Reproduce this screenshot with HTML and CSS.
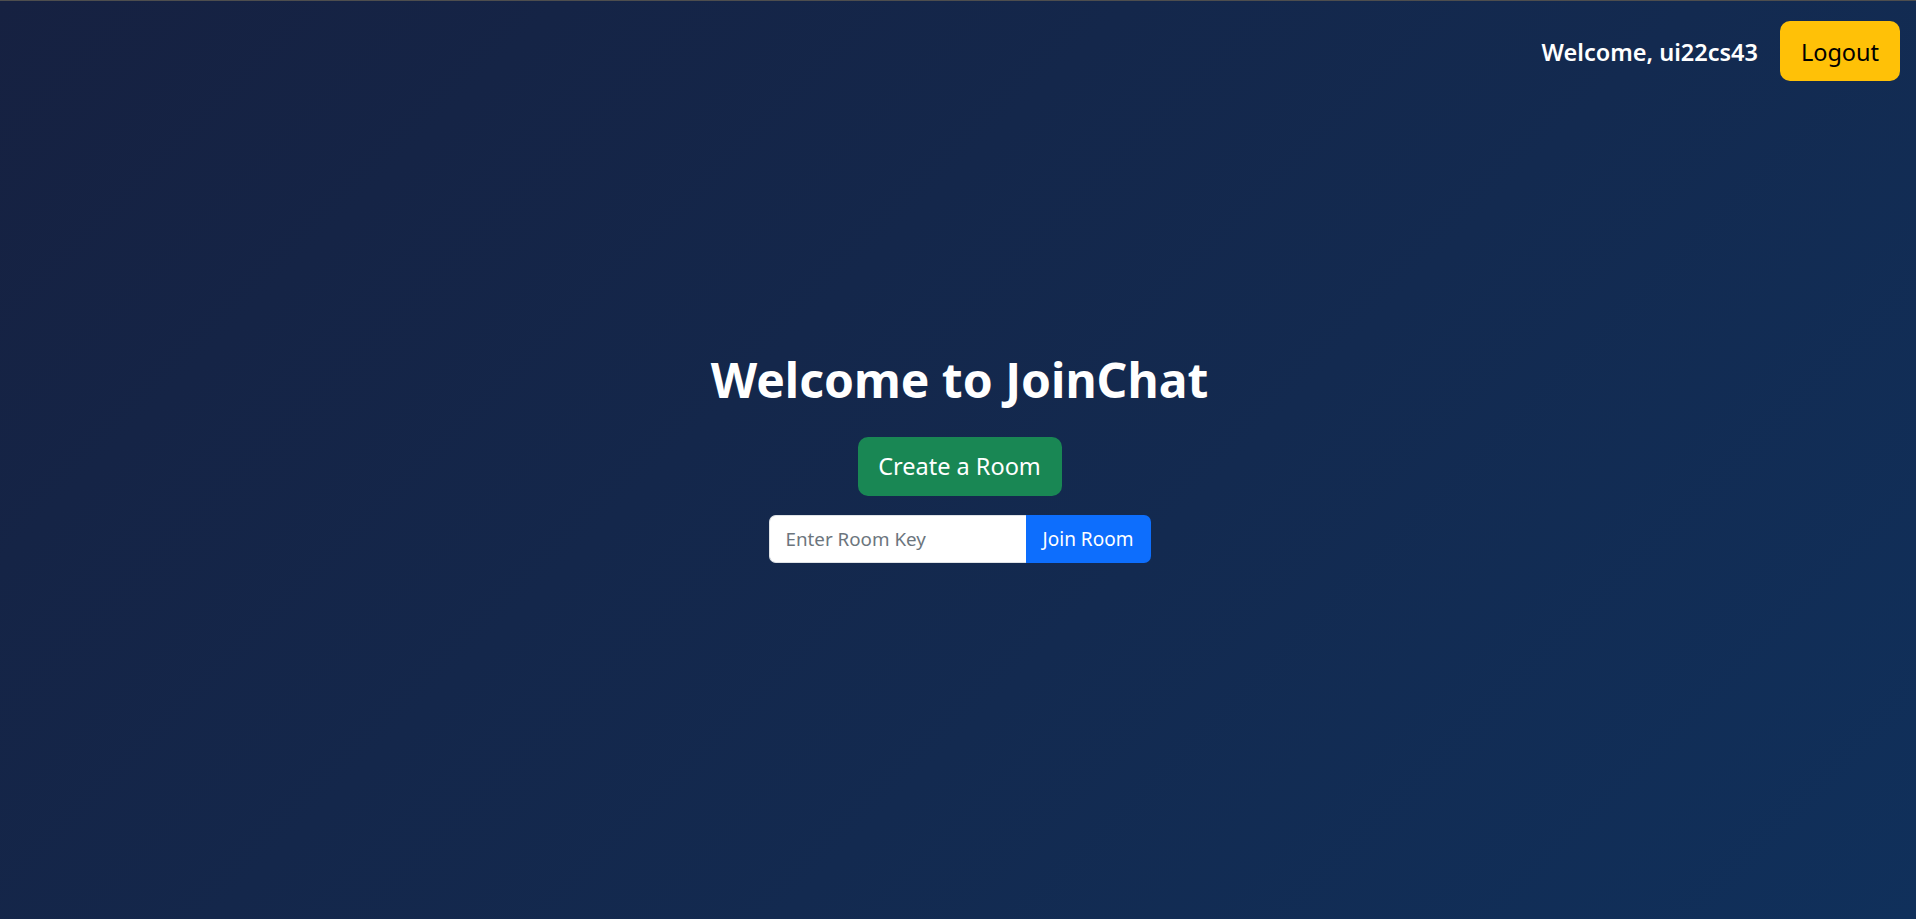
FILE: index.html
```html
<!DOCTYPE html>
<html lang="en">
<head>
<meta charset="utf-8">
<title>JoinChat</title>
<link rel="stylesheet" href="styles.css">
</head>
<body>
<div class="page">
  <header class="topbar">
    <span class="welcome">Welcome, ui22cs43</span>
    <button class="btn btn-warning">Logout</button>
  </header>
  <main class="hero">
    <h1 class="title">Welcome to JoinChat</h1>
    <button class="btn btn-success">Create a Room</button>
    <div class="join-group">
      <input class="join-input" type="text" placeholder="Enter Room Key">
      <button class="join-btn">Join Room</button>
    </div>
  </main>
</div>
</body>
</html>
```

FILE: styles.css
```css
* { box-sizing: border-box; }
html, body { margin: 0; padding: 0; height: 100%; }
body {
  font-family: "Noto Sans", "Open Sans", sans-serif;
  color: #fff;
  background: #14203f;
}
.page {
  min-height: 100vh;
  border-top: 1px solid #4e4e4e;
  background: linear-gradient(135deg, #162141 0%, #132a50 60%, #10305b 100%);
  display: flex;
  flex-direction: column;
}
.topbar {
  display: flex;
  justify-content: flex-end;
  align-items: center;
  gap: 22px;
  padding: 20px 16px 0 0;
}
.welcome {
  font-size: 23.5px;
  font-weight: 600;
  color: #fff;
  padding-top: 2px;
}
.btn {
  font-family: inherit;
  border: none;
  cursor: pointer;
  border-radius: 10px;
  font-size: 23.5px;
  line-height: 1;
}
.btn-warning {
  background: #ffc107;
  color: #000;
  width: 120px;
  height: 60px;
  padding-top: 4px;
}
.hero {
  flex: 1;
  display: flex;
  flex-direction: column;
  align-items: center;
  padding-top: 269px;
  padding-left: 3px;
}
.title {
  margin: 0 0 27px;
  font-size: 48px;
  font-weight: 700;
  line-height: 60px;
}
.btn-success {
  background: #198754;
  color: #fff;
  width: 204px;
  height: 59px;
}
.join-group {
  display: flex;
  margin-top: 19px;
  height: 48px;
}
.join-input {
  width: 257px;
  height: 48px;
  border: 1px solid #dee2e6;
  border-right: none;
  border-radius: 7px 0 0 7px;
  padding: 0 16px;
  font-family: inherit;
  font-size: 18.8px;
  color: #212529;
  background: #fff;
  outline: none;
}
.join-input::placeholder { color: #6c757d; }
.join-btn {
  width: 125px;
  height: 48px;
  border: none;
  border-radius: 0 7px 7px 0;
  background: #0d6efd;
  color: #fff;
  font-family: inherit;
  font-size: 19px;
  cursor: pointer;
}
```
